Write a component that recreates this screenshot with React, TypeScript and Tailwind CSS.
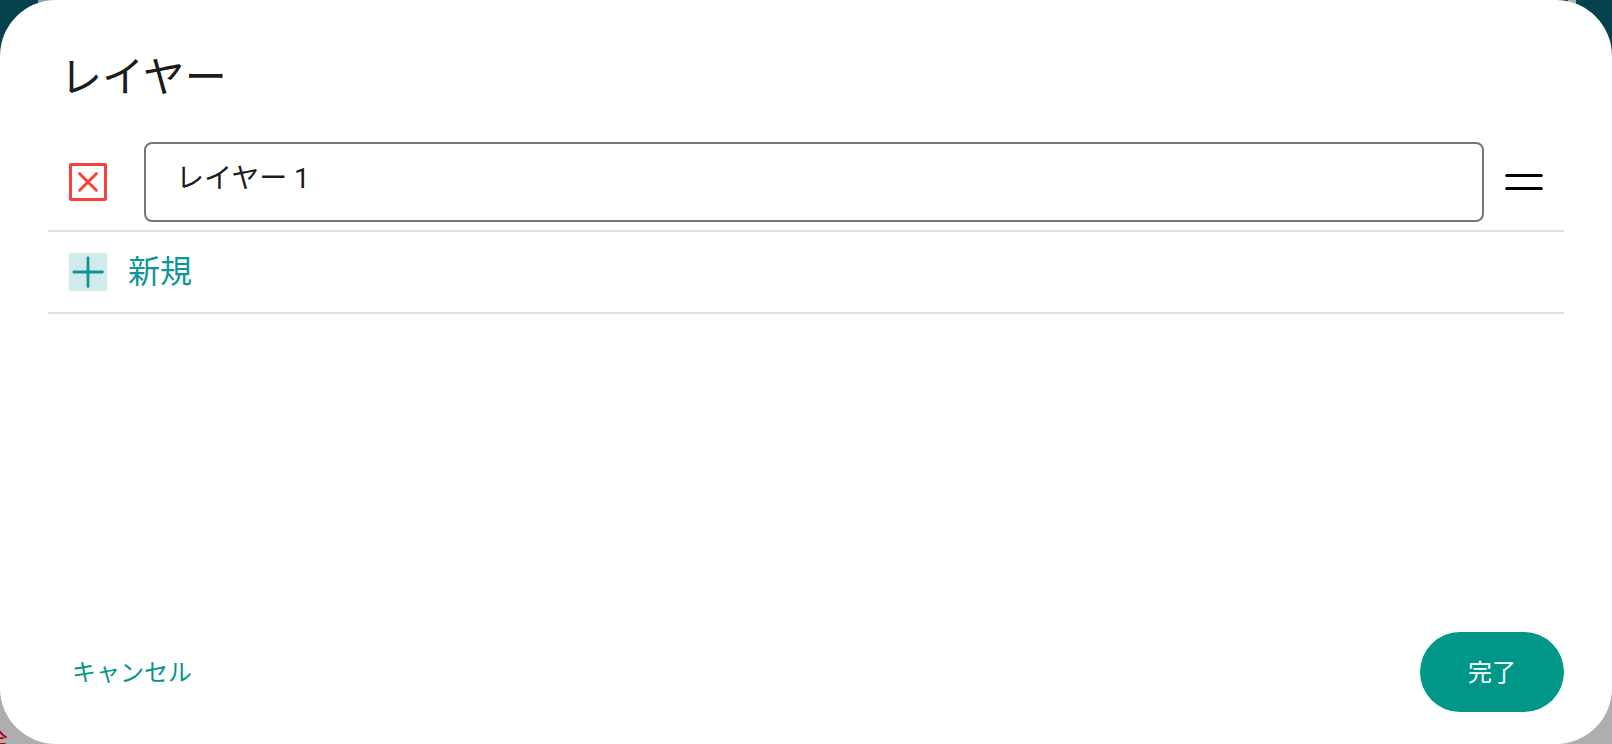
import { useState } from 'react';

interface Layer {
  id: number;
  name: string;
}

function DeleteIcon() {
  return (
    <svg viewBox="0 0 48 48" className="w-12 h-12" fill="none" stroke="#F44336" aria-hidden="true">
      <rect x="6.5" y="6.5" width="35" height="35" rx="0.5" strokeWidth="3" />
      <path d="M15.7 15.7l16.6 16.6M32.3 15.7l-16.6 16.6" strokeWidth="3" strokeLinecap="round" />
    </svg>
  );
}

function AddIcon() {
  return (
    <svg viewBox="0 0 48 48" className="w-12 h-12" fill="none" aria-hidden="true">
      <rect x="5" y="5" width="38" height="38" rx="2" fill="#D0EBEA" />
      <path d="M24 9.8v28.6M9.8 24h28.6" stroke="#0F9698" strokeWidth="2.8" strokeLinecap="round" />
    </svg>
  );
}

function DragIcon() {
  return (
    <svg viewBox="0 0 48 48" className="w-12 h-12" fill="none" aria-hidden="true">
      <path d="M6.7 17.4h34.6M6.7 30.6h34.6" stroke="#000" strokeWidth="3" strokeLinecap="round" />
    </svg>
  );
}

export default function App() {
  const [layers, setLayers] = useState<Layer[]>([{ id: 1, name: 'レイヤー 1' }]);

  const renameLayer = (id: number, name: string) => {
    setLayers(layers.map((layer) => (layer.id === id ? { ...layer, name } : layer)));
  };

  const removeLayer = (id: number) => {
    setLayers(layers.filter((layer) => layer.id !== id));
  };

  const addLayer = () => {
    const id = Math.max(0, ...layers.map((layer) => layer.id)) + 1;
    setLayers([...layers, { id, name: `レイヤー ${id}` }]);
  };

  return (
    <div className="relative grid min-h-screen overflow-hidden bg-[#AEAEAE] font-['Roboto','Noto_Sans_CJK_JP',sans-serif]">
      {/* Page behind the dialog */}
      <div className="absolute inset-x-0 top-0 h-64 bg-[#04434D]">
        <div className="absolute left-[38px] top-0 h-1 w-5 bg-[#7FA9A4]" />
        <div className="absolute right-9 top-0 h-1 w-2 bg-[#A9B4B8]" />
      </div>
      <span className="absolute -left-5 -bottom-4 text-[28px] leading-8 text-[#B50010]">除</span>

      <div
        role="dialog"
        aria-labelledby="layers-title"
        className="relative flex flex-col rounded-[56px] bg-white px-12 pt-12 pb-8"
      >
        <h1 id="layers-title" className="px-3 text-[42px] leading-[60px] text-[#1C1C1C]">
          レイヤー
        </h1>

        <ul className="mt-[26px]">
          {layers.map((layer) => (
            <li key={layer.id} className="flex items-center border-b-2 border-[#E0E0E0] py-2 pl-4 pr-4">
              <button type="button" aria-label="削除" onClick={() => removeLayer(layer.id)}>
                <DeleteIcon />
              </button>
              <input
                type="text"
                aria-label="レイヤー名"
                value={layer.name}
                onChange={(e) => renameLayer(layer.id, e.target.value)}
                className="ml-8 mr-4 h-20 min-w-0 flex-1 rounded-lg border-2 border-[#757575] px-[30px] pb-3 text-[28px] text-[#1C1C1C] outline-none"
              />
              <button type="button" aria-label="並べ替え" className="cursor-grab">
                <DragIcon />
              </button>
            </li>
          ))}
          <li className="border-b-2 border-[#E0E0E0]">
            <button
              type="button"
              onClick={addLayer}
              className="flex h-20 w-full items-center gap-4 px-4 text-[32px] text-[#0F9698]"
            >
              <AddIcon />
              新規
            </button>
          </li>
        </ul>

        <div className="mt-auto flex items-center justify-between">
          <button type="button" className="h-20 px-6 pt-0.5 text-2xl text-[#009688]">
            キャンセル
          </button>
          <button type="button" className="h-20 w-36 rounded-full bg-[#009688] pt-0.5 text-2xl text-white">
            完了
          </button>
        </div>
      </div>
    </div>
  );
}
